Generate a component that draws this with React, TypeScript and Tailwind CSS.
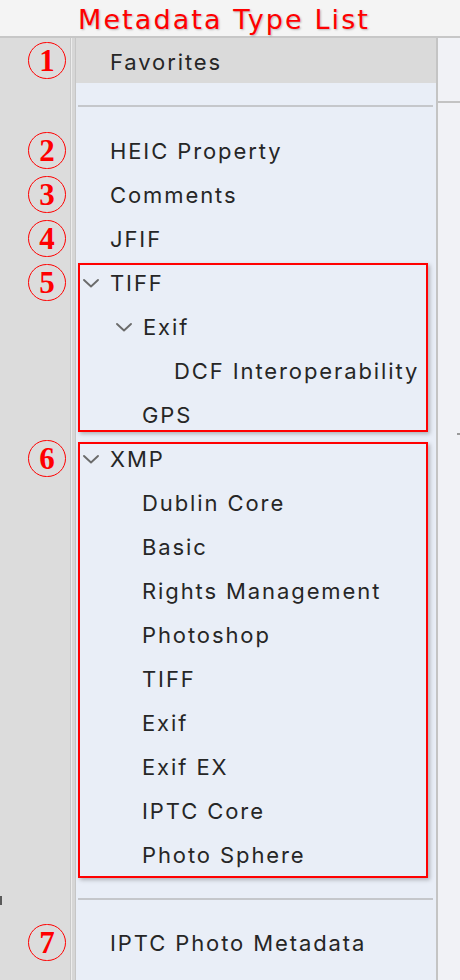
import React from "react";

function Num({ n }: { n: string }) {
  return (
    <div className="h-[44px] flex items-center justify-end pr-[4px]">
      <span className="w-[38px] h-[37px] rounded-full border-[1.5px] border-[#ff0000] flex items-center justify-center text-[#ff0000] text-[31px] font-bold leading-none [font-family:'Liberation_Serif',serif]">
        {n}
      </span>
    </div>
  );
}

function Chevron() {
  return (
    <svg width="18" height="12" viewBox="0 0 18 12" className="shrink-0">
      <path d="M2 3 L9 9.5 L16 3" fill="none" stroke="#6b6b6b" strokeWidth="1.9" strokeLinecap="round" strokeLinejoin="round" />
    </svg>
  );
}

const TXT = "text-[22px] text-[#262626] tracking-[1.9px] leading-none";

function Row({ label, indent, chevron }: { label: string; indent: number; chevron?: boolean }) {
  const pad = indent === 0 ? "pl-[34px]" : indent === 1 ? "pl-[66px]" : "pl-[98px]";
  const cpad = indent === 0 ? "pl-[6px]" : "pl-[39px]";
  return (
    <div className={`h-[44px] flex items-center ${chevron ? cpad : pad}`}>
      {chevron && <span className="w-[28px] flex items-center"><Chevron /></span>}
      <span className={TXT}>{label}</span>
    </div>
  );
}

export default function App() {
  return (
    <div className="w-[460px] h-[980px] overflow-hidden flex flex-col bg-[#f1f2f6] [font-family:Inter,'Noto_Sans',sans-serif]">
      <div className="h-[38px] shrink-0 bg-[#f4f4f4] border-b-2 border-[#c7c7c7] flex items-center pl-[78px] pt-[2px]">
        <span className="text-[#ff0000] text-[27px] leading-none [font-family:'DejaVu_Sans',sans-serif] [text-shadow:1px_1px_2px_rgba(0,0,0,0.25)] tracking-[2.1px]">
          Metadata Type List
        </span>
      </div>
      <div className="flex flex-1 min-h-0">
        {/* left gray column */}
        <div className="w-[70px] shrink-0 bg-[#dcdcdc] flex flex-col relative">
          <Num n="1" />
          <div className="h-[46px]" />
          <Num n="2" />
          <Num n="3" />
          <Num n="4" />
          <Num n="5" />
          <div className="h-[132px]" />
          <Num n="6" />
          <div className="h-[440px]" />
          <Num n="7" />
          <span className="absolute left-0 top-[858px] w-[2px] h-[9px] bg-[#5a5a5a]" />
        </div>
        {/* divider */}
        <div className="w-[6px] shrink-0 flex">
          <div className="w-[1px] bg-[#c9c9c9]" />
          <div className="w-[1px] bg-[#ececec]" />
          <div className="w-[3px] bg-[#d6d6d6]" />
          <div className="w-[1px] bg-[#c6c6c6]" />
        </div>
        {/* sidebar */}
        <div className="w-[360px] shrink-0 bg-[#e9eef7] flex flex-col">
          <div className="h-[45px] bg-[#dadada] flex items-center pl-[34px] pt-[3px]">
            <span className={TXT}>Favorites</span>
          </div>
          <div className="h-[46px] flex items-center pl-[2px] pr-[3px]">
            <div className="h-[2px] w-full bg-[#c5c7cb]" />
          </div>
          <Row label="HEIC Property" indent={0} />
          <Row label="Comments" indent={0} />
          <Row label="JFIF" indent={0} />
          <div className="relative">
            <Row label="TIFF" indent={0} chevron />
            <Row label="Exif" indent={1} chevron />
            <Row label="DCF Interoperability" indent={2} />
            <Row label="GPS" indent={1} />
            <div className="absolute left-[2px] right-[8px] top-[2px] bottom-[5px] border-2 border-[#ff0000] shadow-[2px_2px_4px_rgba(0,0,0,0.25)]" />
          </div>
          <div className="relative">
            <Row label="XMP" indent={0} chevron />
            <Row label="Dublin Core" indent={1} />
            <Row label="Basic" indent={1} />
            <Row label="Rights Management" indent={1} />
            <Row label="Photoshop" indent={1} />
            <Row label="TIFF" indent={1} />
            <Row label="Exif" indent={1} />
            <Row label="Exif EX" indent={1} />
            <Row label="IPTC Core" indent={1} />
            <Row label="Photo Sphere" indent={1} />
            <div className="absolute left-[2px] right-[8px] top-[5px] bottom-[-1px] border-2 border-[#ff0000] shadow-[2px_2px_4px_rgba(0,0,0,0.25)]" />
          </div>
          <div className="h-[44px] flex items-center pl-[2px] pr-[3px]">
            <div className="h-[2px] w-full bg-[#c5c7cb]" />
          </div>
          <Row label="IPTC Photo Metadata" indent={0} />
        </div>
        {/* right divider */}
        <div className="w-[2px] shrink-0 bg-[#c4c4c4]" />
        {/* right panel */}
        <div className="flex-1 bg-[#f1f2f6] flex flex-col relative">
          <div className="h-[63px]" />
          <div className="h-[2px] bg-[#c3c3c3]" />
          <span className="absolute right-0 top-[395px] w-[3px] h-[2px] bg-[#9a9a9a]" />
        </div>
      </div>
    </div>
  );
}
